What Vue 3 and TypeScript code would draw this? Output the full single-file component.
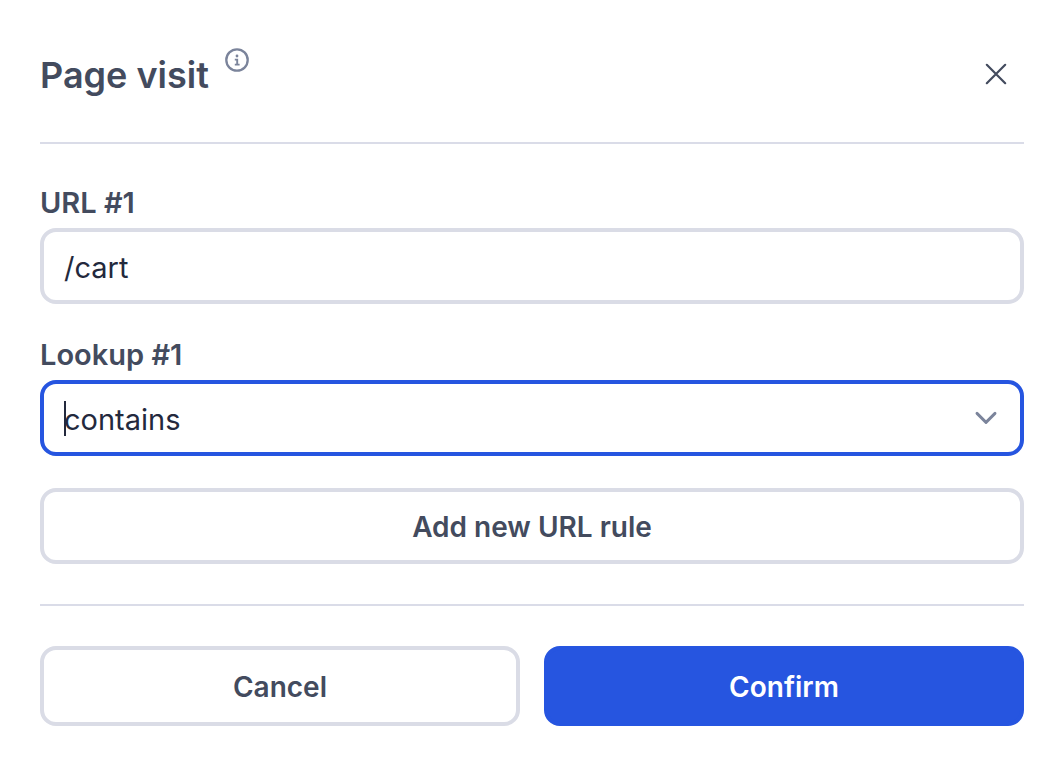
<script setup lang="ts">
import { ref } from 'vue'

const url = ref('/cart')
const lookup = ref('contains')
const lookupOptions: string[] = ['contains', 'equals', 'starts with', 'ends with']
</script>

<template>
  <main class="dialog" role="dialog" aria-labelledby="dialog-title">
    <header class="header">
      <h1 id="dialog-title" class="title">Page visit</h1>
      <button class="icon-button info" type="button" aria-label="More information">
        <svg width="24" height="24" viewBox="0 0 24 24" fill="none" stroke="currentColor" stroke-width="2.3">
          <circle cx="12" cy="12" r="10.7" />
          <circle cx="12" cy="8" r="1.4" fill="currentColor" stroke="none" />
          <path d="M9.8 11.6h2.4v4.8M9.8 16.6h4.8" stroke-width="1.9" />
        </svg>
      </button>
      <button class="icon-button close" type="button" aria-label="Close">
        <svg width="24" height="24" viewBox="0 0 24 24" fill="none" stroke="currentColor" stroke-width="2.2" stroke-linecap="round">
          <path d="M2.8 2.8l18.4 18.4M21.2 2.8L2.8 21.2" />
        </svg>
      </button>
    </header>

    <form class="body" @submit.prevent>
      <div class="field">
        <label class="label" for="url-1">URL #1</label>
        <input id="url-1" v-model="url" class="control" type="text" />
      </div>
      <div class="field">
        <label class="label" for="lookup-1">Lookup #1</label>
        <div class="select-wrap">
          <select id="lookup-1" v-model="lookup" class="control active">
            <option v-for="option in lookupOptions" :key="option" :value="option">{{ option }}</option>
          </select>
          <span class="caret" aria-hidden="true"></span>
          <svg class="chevron" width="24" height="24" viewBox="0 0 24 24" fill="none" stroke="currentColor" stroke-width="2.9" stroke-linecap="round" stroke-linejoin="round">
            <path d="M3 7.4l9 9 9-9" />
          </svg>
        </div>
      </div>
      <button class="button add" type="button">Add new URL rule</button>
    </form>

    <footer class="footer">
      <button class="button tall" type="button">Cancel</button>
      <button class="button tall primary" type="button">Confirm</button>
    </footer>
  </main>
</template>

<style>
body {
  margin: 0;
  background: #ffffff;
}
</style>

<style scoped>
.dialog {
  box-sizing: border-box;
  padding: 40px 36px 40px 40px;
  color: #434b5e;
  font-family: Inter, "Liberation Sans", sans-serif;
}

.header {
  display: flex;
  align-items: flex-start;
  padding-bottom: 32px;
  border-bottom: 2px solid #dadce8;
}

.title {
  margin: 0;
  font-size: 36px;
  font-weight: 600;
  line-height: 70px;
}

.icon-button {
  display: flex;
  padding: 0;
  border: 0;
  background: none;
  color: inherit;
  cursor: pointer;
}

.info {
  margin: 8px 0 0 16px;
  color: #7b849b;
}

.close {
  margin: 22px 16px 0 auto;
}

.body {
  display: flex;
  flex-direction: column;
  gap: 32px;
  padding: 40px 0;
  border-bottom: 2px solid #dadce8;
}

.field {
  display: flex;
  flex-direction: column;
  gap: 6px;
}

.label {
  font-size: 29px;
  font-weight: 600;
  line-height: 38px;
}

.control {
  box-sizing: border-box;
  display: block;
  width: 100%;
  height: 76px;
  margin: 0;
  padding: 2px 20px 0;
  border: 4px solid #dadce6;
  border-radius: 16px;
  outline: none;
  appearance: none;
  background: #ffffff;
  color: #23293d;
  font: inherit;
  font-size: 29px;
}

.active {
  border-color: #2655e0;
}

.select-wrap {
  position: relative;
}

.caret {
  position: absolute;
  top: 21px;
  bottom: 20px;
  left: 24px;
  width: 2px;
  background: #23293d;
  pointer-events: none;
}

.chevron {
  position: absolute;
  top: 26px;
  right: 26px;
  color: #7b849b;
  pointer-events: none;
}

.button {
  box-sizing: border-box;
  flex: 1;
  min-height: 76px;
  padding: 2px 20px 0;
  border: 4px solid #dadce6;
  border-radius: 16px;
  background: #ffffff;
  color: inherit;
  font: inherit;
  font-size: 28px;
  font-weight: 600;
  cursor: pointer;
}

.tall {
  min-height: 80px;
}

.primary {
  border-color: #2655e0;
  background: #2655e0;
  color: #ffffff;
}

.footer {
  display: flex;
  gap: 24px;
  padding-top: 40px;
}
</style>
